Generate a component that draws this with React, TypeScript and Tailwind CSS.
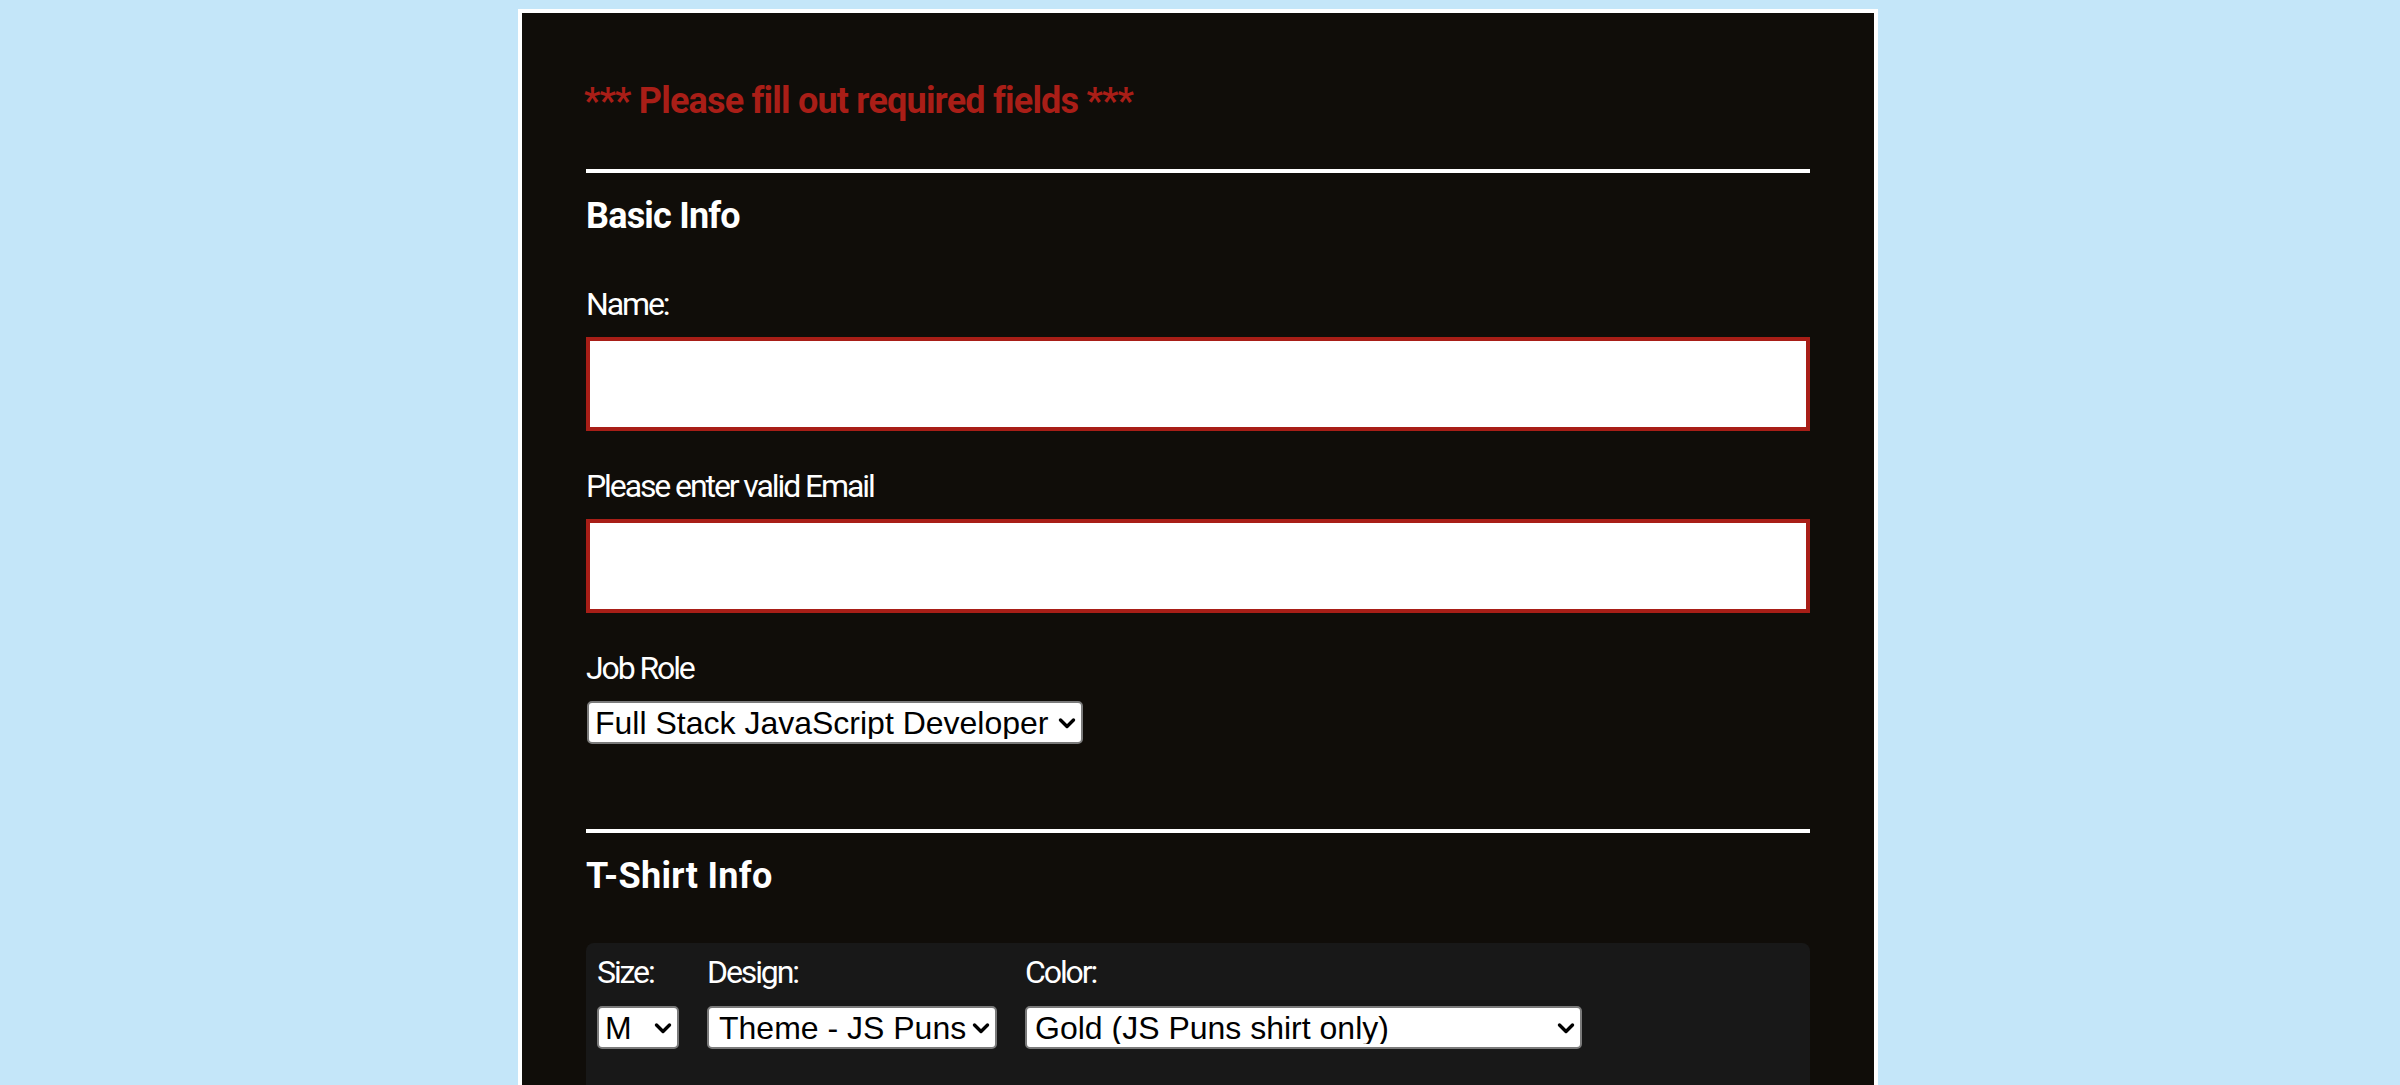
import React from 'react';

const bodyFont = "font-['Roboto','Liberation_Sans',sans-serif]";

function Chevron() {
  return (
    <svg viewBox="0 0 18 12" className="w-[18px] h-[12px]" fill="none" stroke="#000" strokeWidth="3.4" strokeLinecap="round" strokeLinejoin="round">
      <path d="M2.5 3 L9 9.5 L15.5 3" />
    </svg>
  );
}

type SelectProps = {
  options: string[];
  width: string;
  pad?: string;
};

function Select({ options, width, pad = 'pl-[6px]' }: SelectProps) {
  return (
    <div className={`relative h-[43px] ${width}`}>
      <select
        defaultValue={options[0]}
        className={`appearance-none w-full h-full bg-white border-2 border-[#7a7a7a] rounded-[5px] ${pad} pr-[28px] text-[32px] leading-none text-black font-['Liberation_Sans',Arial,sans-serif] outline-none`}
      >
        {options.map((o) => (
          <option key={o}>{o}</option>
        ))}
      </select>
      <span className="pointer-events-none absolute right-[7px] top-1/2 -translate-y-1/2 flex">
        <Chevron />
      </span>
    </div>
  );
}

function Label({ children, className = '' }: { children: React.ReactNode; className?: string }) {
  return <label className={`block text-[32px] leading-[40px] tracking-[-2.1px] text-white ${className}`}>{children}</label>;
}

export default function App() {
  return (
    <div className="min-h-screen bg-[#c4e6f9] flex justify-center pr-[4px] pt-[9px]">
      <div className={`w-[1360px] border-4 border-white bg-[#100d09] px-16 pt-[66px] pb-[200px] ${bodyFont}`}>
        {/* Error message */}
        <h2 className="-ml-[2px] text-[36px] leading-[44px] font-bold tracking-[-0.8px] text-[#a91e17]">
          *** Please fill out required fields ***
        </h2>

        {/* Basic info */}
        <div className="mt-[46px] h-[4px] bg-white" />
        <h3 className="mt-[21px] text-[36px] leading-[44px] font-bold tracking-[-0.8px] text-white">Basic Info</h3>

        <Label className="mt-[46px]">Name:</Label>
        <input type="text" className="mt-[13px] block w-full h-[94px] border-4 border-[#a81e17] bg-white outline-none" />

        <Label className="mt-[35px]">Please enter valid Email</Label>
        <input type="email" className="mt-[13px] block w-full h-[94px] border-4 border-[#a81e17] bg-white outline-none" />

        <Label className="mt-[35px]">Job Role</Label>
        <div className="mt-[13px] ml-[1px]">
          <Select width="w-[496px]" options={['Full Stack JavaScript Developer', 'Front End Developer', 'Back End Developer', 'Designer', 'Student', 'Other']} />
        </div>

        {/* T-Shirt info */}
        <div className="mt-[85px] h-[4px] bg-white" />
        <h3 className="mt-[21px] text-[36px] leading-[44px] font-bold tracking-[0.3px] text-white">T-Shirt Info</h3>

        <div className="mt-[45px] bg-[#181818] rounded-[8px] pl-[11px] pt-[9px] pb-[120px]">
          <div className="flex gap-[28px]">
            <div>
              <Label>Size:</Label>
              <div className="mt-[14px]">
                <Select width="w-[82px]" options={['M', 'S', 'L', 'XL']} />
              </div>
            </div>
            <div>
              <Label>Design:</Label>
              <div className="mt-[14px]">
                <Select width="w-[290px]" pad="pl-[10px]" options={['Theme - JS Puns', 'Theme - I ♥ JS']} />
              </div>
            </div>
            <div>
              <Label>Color:</Label>
              <div className="mt-[14px]">
                <Select width="w-[557px]" pad="pl-[8px]" options={['Gold (JS Puns shirt only)', 'Cornflower Blue (JS Puns shirt only)', 'Dark Slate Grey (JS Puns shirt only)']} />
              </div>
            </div>
          </div>
        </div>
      </div>
    </div>
  );
}
